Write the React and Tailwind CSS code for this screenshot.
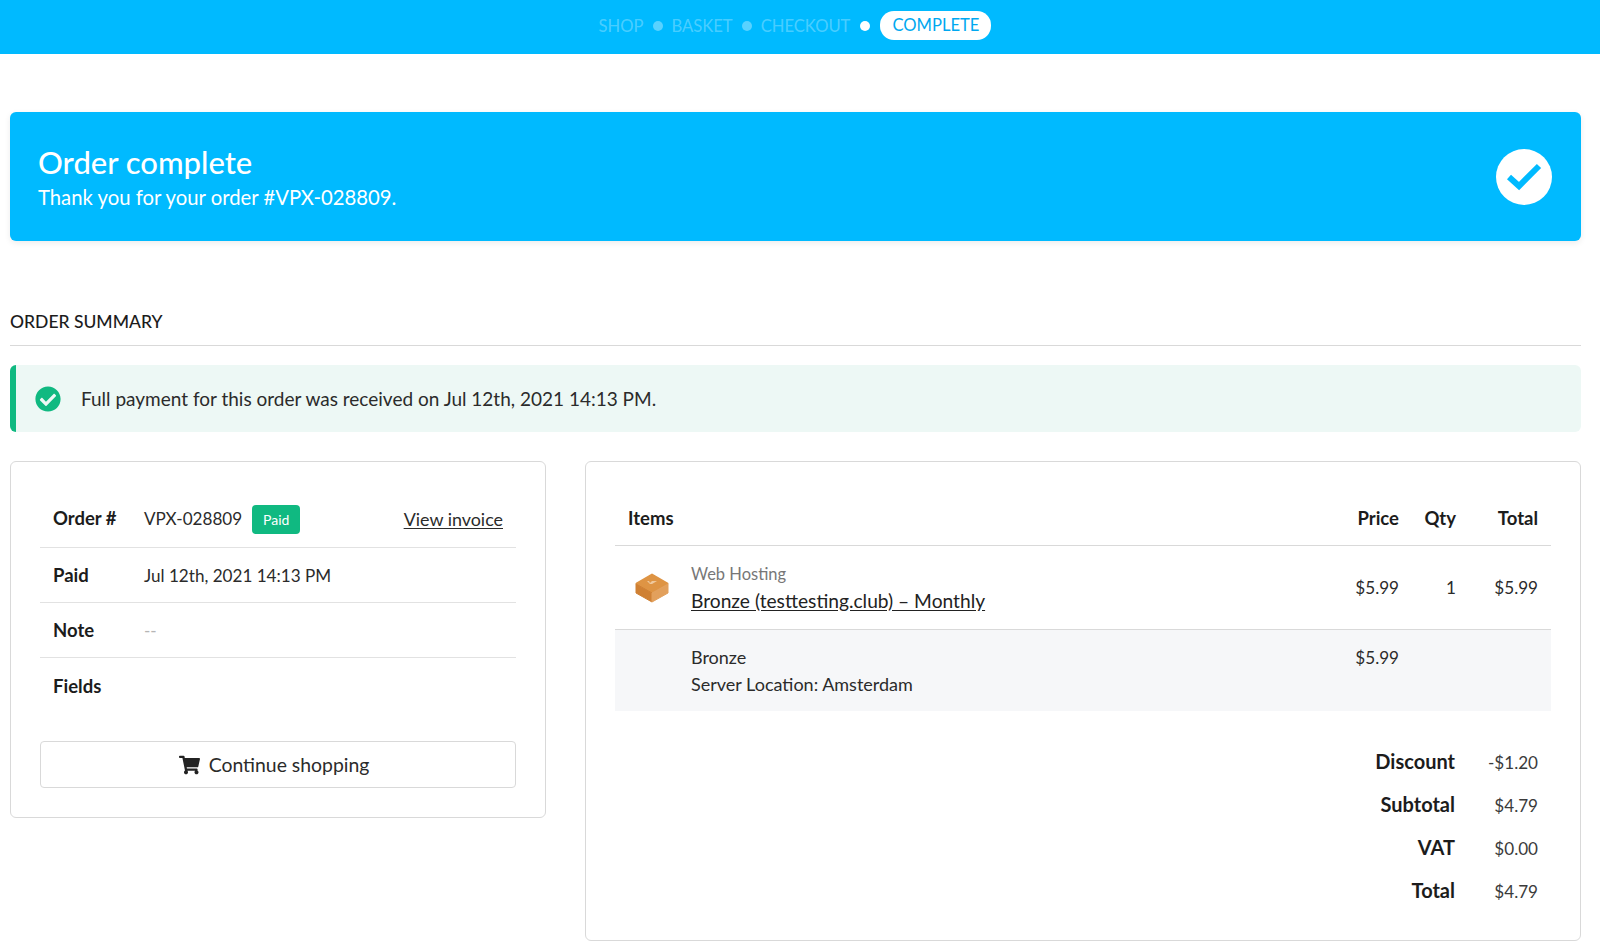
import React from "react";
import { FaCheckCircle, FaShoppingCart } from "react-icons/fa";

const body = "font-['Lato','Noto_Sans',sans-serif]";
const head = "font-['Lato','Open_Sans',sans-serif]";

function Dot({ on }) {
  return <span className={on ? "mx-[10px] h-[10px] w-[10px] rounded-full bg-white" : "mx-[9px] h-[10px] w-[10px] rounded-full bg-white/35"} />;
}

function Step({ children }) {
  return <span className="pt-[2px] text-[16.6px] leading-[29px] text-white/30">{children}</span>;
}

function Cube() {
  return (
    <svg width="34" height="30" viewBox="0 0 34 30">
      <path d="M17 1.5 32.5 10.5 17 19.5 1.5 10.5Z" fill="#de9444" stroke="#de9444" strokeWidth="2" strokeLinejoin="round" />
      <path d="M1 11 17 20V29L1 20Z" fill="#cf8033" stroke="#cf8033" strokeLinejoin="round" />
      <path d="M33 11 17 20V29L33 20Z" fill="#e2a05c" stroke="#e2a05c" strokeLinejoin="round" />
      <path d="M12 8h2l1 2 2-2h5l-5 3h-2Z" fill="#efc89c" />
    </svg>
  );
}

function InfoRow({ label, first, last, children, extra }) {
  return (
    <div className={"flex h-[55px] items-center pl-[13px] pr-[14px] " + (first ? "pb-[2px] " : "pt-[2px] ") + (last ? "" : "border-b border-[#e2e2e2]")}>
      <span className="w-[91px] text-[18.5px] font-bold text-[#1c1c1c]">{label}</span>
      {children}
      {extra}
    </div>
  );
}

function SumRow({ label, value }) {
  return (
    <div className="flex h-[43px] items-center justify-end pr-[13px]">
      <span className="pb-[3px] text-[20px] font-bold text-[#1c1c1c]">{label}</span>
      <span className="w-[83px] text-right text-[#3b3b3b]">{value}</span>
    </div>
  );
}

export default function App() {
  return (
    <div className={"min-h-[952px] bg-white text-[17.1px] text-[#2b2b2b] " + body}>
      <header className={"flex h-[54px] items-start justify-center bg-[#00baff] pr-[10px] pt-[10px] " + head}>
        <div className="flex items-center">
          <Step>SHOP</Step>
          <Dot />
          <Step>BASKET</Step>
          <Dot />
          <Step>CHECKOUT</Step>
          <Dot on />
          <span className="flex h-[29px] w-[111px] items-center justify-center rounded-[14px] bg-white text-[16.6px] text-[#00a8f0]">COMPLETE</span>
        </div>
      </header>

      <main className="pl-[10px] pr-[19px]">
        <section className={"mt-[58px] flex h-[129px] items-center justify-between rounded-[6px] bg-[#00baff] pl-[28px] pr-[29px] text-white shadow-[0_2px_6px_rgba(0,0,0,0.08)] " + head}>
          <div className="pt-[2px]">
            <h1 className="mt-[-1px] text-[31px] font-medium leading-[36px]">Order complete</h1>
            <p className="mt-[3px] text-[20.3px] leading-[28px]">Thank you for your order #VPX-028809.</p>
          </div>
          <span className="flex h-[56px] w-[56px] items-center justify-center rounded-full bg-white">
            <svg width="36" height="30" viewBox="0 0 36 30" fill="none">
              <path d="M3 15 13 24 33 4" stroke="#00baff" strokeWidth="6" strokeLinejoin="miter" />
            </svg>
          </span>
        </section>

        <h2 className={"mt-[69px] border-b border-[#d9d9d9] pb-[11px] text-[17.5px] font-medium leading-[24px] text-[#1c1c1c] " + head}>ORDER SUMMARY</h2>

        <div className="mt-[19px] flex h-[67px] items-center rounded-[6px] border-l-[6px] border-[#10b981] bg-[#edf8f5] pl-[19px]">
          <FaCheckCircle className="h-[26px] w-[26px] text-[#10b981]" />
          <p className="ml-[20px] pt-[2px] text-[19px] text-[#2b2b2b]">Full payment for this order was received on Jul 12th, 2021 14:13 PM.</p>
        </div>

        <div className="mt-[29px] flex items-start gap-[39px]">
          <section className="h-[357px] w-[536px] shrink-0 rounded-[6px] border border-[#d9d9d9] px-[29px] pt-[31px]">
            <InfoRow
              first
              label="Order #"
              extra={<a className="ml-auto mr-[-1px] text-[17.9px] text-[#2b2b2b] underline underline-offset-2">View invoice</a>}
            >
              <span>VPX-028809</span>
              <span className="ml-[10px] flex h-[29px] w-[48px] items-center justify-center rounded-[4px] bg-[#10b981] text-[14px] text-white">Paid</span>
            </InfoRow>
            <InfoRow label="Paid"><span>Jul 12th, 2021 14:13 PM</span></InfoRow>
            <InfoRow label="Note"><span className="text-[#b5b5b5]">--</span></InfoRow>
            <InfoRow label="Fields" last />
            <button className="mt-[28px] flex h-[47px] w-full items-center justify-center gap-[9px] rounded-[4px] border border-[#d9d9d9] bg-white pr-[8px] text-[#2b2b2b]">
              <FaShoppingCart className="h-[20px] w-[21px] text-[#222]" />
              <span className="text-[19.4px]">Continue shopping</span>
            </button>
          </section>

          <section className="h-[480px] min-w-0 flex-1 rounded-[6px] border border-[#d9d9d9] px-[29px] pt-[31px]">
            <div className="flex h-[53px] items-center border-b border-[#d9d9d9] pl-[13px] pr-[13px] text-[18.5px] font-bold text-[#1c1c1c]">
              <span className="flex-1">Items</span>
              <span className="w-[70px] text-right">Price</span>
              <span className="w-[57px] text-right">Qty</span>
              <span className="w-[82px] text-right">Total</span>
            </div>
            <div className="flex h-[84px] items-center border-b border-[#d9d9d9] pl-[20px] pr-[13px]">
              <Cube />
              <div className="ml-[22px] flex-1">
                <div className="text-[16.5px] leading-[26px] text-[#777]">Web Hosting</div>
                <a className="block text-[19.2px] leading-[28px] text-[#222] underline underline-offset-2">Bronze (testtesting.club) – Monthly</a>
              </div>
              <span className="w-[70px] text-right">$5.99</span>
              <span className="w-[57px] text-right">1</span>
              <span className="w-[82px] text-right">$5.99</span>
            </div>
            <div className="flex h-[81px] items-start bg-[#f6f7f9] pl-[76px] pr-[13px] pt-[14px]">
              <div className="flex-1 text-[18px] leading-[27px]">
                <div>Bronze</div>
                <div>Server Location: Amsterdam</div>
              </div>
              <span className="mr-[139px] w-[70px] text-right leading-[27px]">$5.99</span>
            </div>
            <div className="mt-[30px]">
              <SumRow label="Discount" value="-$1.20" />
              <SumRow label="Subtotal" value="$4.79" />
              <SumRow label="VAT" value="$0.00" />
              <SumRow label="Total" value="$4.79" />
            </div>
          </section>
        </div>
      </main>
    </div>
  );
}
